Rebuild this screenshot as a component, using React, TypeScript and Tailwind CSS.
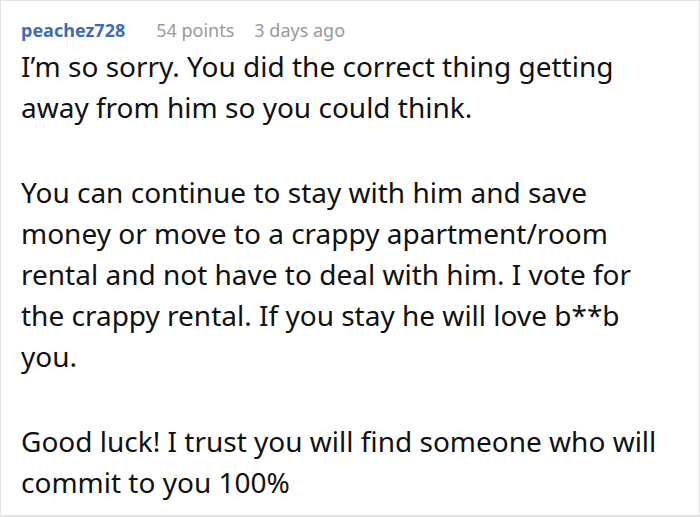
export default function App() {
  return (
    <div className="w-[700px] h-[517px] bg-white border border-[#e3e3e3] border-b-2 overflow-hidden font-['Noto_Sans',sans-serif]">
      <div className="pl-[20px] pr-2 pt-[16px]">
        {/* Comment header */}
        <div className="flex items-baseline text-[18px] leading-[26px]">
          <span className="font-bold text-[#3d6cbd]">peachez728</span>
          <span className="ml-[31px] text-[#999999]">54 points</span>
          <span className="ml-[20px] text-[#999999]">3 days ago</span>
        </div>

        {/* Comment body */}
        <div className="mt-[3px] text-[28px] leading-[41px] text-[#111111]">
          <p>
            I’m so sorry. You did the correct thing getting
            <br />
            away from him so you could think.
          </p>
          <p className="mt-[44px]">
            You can continue to stay with him and save
            <br />
            money or move to a crappy apartment/room
            <br />
            rental and not have to deal with him. I vote for
            <br />
            the crappy rental. If you stay he will love b**b
            <br />
            you.
          </p>
          <p className="mt-[44px]">
            Good luck! I trust you will find someone who will
            <br />
            commit to you 100%
          </p>
        </div>
      </div>
    </div>
  )
}
